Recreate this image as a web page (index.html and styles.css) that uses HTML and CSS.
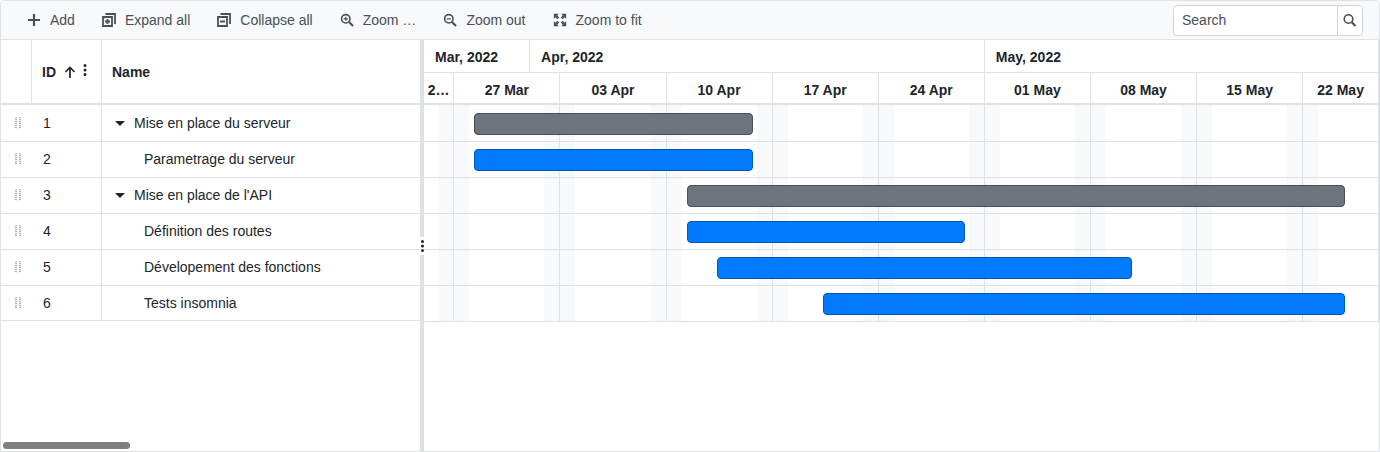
FILE: index.html
```html
<!DOCTYPE html>
<html lang="en">
<head>
<meta charset="utf-8">
<title>Gantt</title>
<link rel="stylesheet" href="styles.css">
</head>
<body>
<main class="gantt">
  <header class="toolbar">
    <div class="tools">
      <button class="tool" type="button"><svg class="icon" viewBox="0 0 14 14"><path d="M7 1v12M1 7h12" stroke="currentColor" stroke-width="2.200" fill="none"/></svg>Add</button>
      <button class="tool" type="button"><svg class="icon" viewBox="0 0 14 14"><path d="M3.500 1h9.500v10M1 4h9v9H1zM5.500 6v5M3 8.500h5" stroke="currentColor" stroke-width="1.800" fill="none"/></svg>Expand all</button>
      <button class="tool" type="button"><svg class="icon" viewBox="0 0 14 14"><path d="M3.500 1h9.500v10M1 4h9v9H1zM3 8.500h5" stroke="currentColor" stroke-width="1.800" fill="none"/></svg>Collapse all</button>
      <button class="tool" type="button"><svg class="icon" viewBox="0 0 14 14"><circle cx="5.800" cy="5.800" r="4.200" stroke="currentColor" stroke-width="1.600" fill="none"/><path d="M9 9l4 4" stroke="currentColor" stroke-width="2.200"/><path d="M3.800 5.800h4M5.800 3.800v4" stroke="currentColor" stroke-width="1.200"/></svg>Zoom …</button>
      <button class="tool" type="button"><svg class="icon" viewBox="0 0 14 14"><circle cx="5.800" cy="5.800" r="4.200" stroke="currentColor" stroke-width="1.600" fill="none"/><path d="M9 9l4 4" stroke="currentColor" stroke-width="2.200"/><path d="M3.800 5.800h4" stroke="currentColor" stroke-width="1.200"/></svg>Zoom out</button>
      <button class="tool" type="button"><svg class="icon" viewBox="0 0 14 14"><path d="M.8.8h5L4.300 2.500 6.200 4.400 4.400 6.200 2.500 4.300.8 5.800zM13.200.8h-5l1.500 1.700-1.900 1.900 1.800 1.800 1.900-1.900 1.700 1.500zM.8 13.200h5l-1.500-1.700 1.900-1.900-1.800-1.800-1.900 1.900L.8 8.200zM13.200 13.200h-5l1.500-1.700-1.900-1.900 1.800-1.800 1.900 1.900 1.700-1.500z" fill="currentColor"/></svg>Zoom to fit</button>
    </div>
    <form class="search">
      <input class="search-input" type="text" placeholder="Search" aria-label="Search">
      <button class="search-button" type="button" aria-label="Search"><svg class="icon" viewBox="0 0 14 14"><circle cx="5.500" cy="6" r="4.300" stroke="currentColor" stroke-width="1.600" fill="none"/><path d="M8.500 9l4 4" stroke="currentColor" stroke-width="2"/></svg></button>
    </form>
  </header>
  <div class="panes">
    <section class="tree">
      <table class="grid">
        <colgroup><col class="col-drag"><col class="col-id"><col></colgroup>
        <thead>
          <tr>
            <th></th>
            <th><span class="head">ID<svg class="sort" viewBox="0 0 12 12"><path d="M6 12V1.500M1.500 6L6 1.500 10.500 6" stroke="currentColor" stroke-width="1.700" fill="none"/></svg><svg class="menu" viewBox="0 0 4 12"><path d="M2 1.500v0M2 6v0M2 10.500v0" stroke="currentColor" stroke-width="3" stroke-linecap="round"/></svg></span></th>
            <th>Name</th>
          </tr>
        </thead>
        <tbody>
          <tr><td><span class="drag"></span></td><td>1</td><td><span class="parent"><span class="caret"></span>Mise en place du serveur</span></td></tr>
          <tr><td><span class="drag"></span></td><td>2</td><td><span class="child">Parametrage du serveur</span></td></tr>
          <tr><td><span class="drag"></span></td><td>3</td><td><span class="parent"><span class="caret"></span>Mise en place de l'API</span></td></tr>
          <tr><td><span class="drag"></span></td><td>4</td><td><span class="child">Définition des routes</span></td></tr>
          <tr><td><span class="drag"></span></td><td>5</td><td><span class="child">Dévelopement des fonctions</span></td></tr>
          <tr><td><span class="drag"></span></td><td>6</td><td><span class="child">Tests insomnia</span></td></tr>
        </tbody>
      </table>
      <div class="scroll-thumb"></div>
    </section>
    <div class="splitter"><span class="handle"><svg class="handle-dots" viewBox="0 0 4 14"><path d="M2.500 2.500v0M2.500 7v0M2.500 11.500v0" stroke="currentColor" stroke-width="3" stroke-linecap="round"/></svg></span></div>
    <section class="timeline">
      <div class="months"><div>Mar, 2022</div><div>Apr, 2022</div><div>May, 2022</div></div>
      <div class="weeks week-names"><div>2…</div><div>27 Mar</div><div>03 Apr</div><div>10 Apr</div><div>17 Apr</div><div>24 Apr</div><div>01 May</div><div>08 May</div><div>15 May</div><div>22 May</div></div>
      <div class="chart">
        <div class="weeks stripes"><div></div><div></div><div></div><div></div><div></div><div></div><div></div><div></div><div></div><div></div></div>
        <div class="rows">
          <div class="row"><div class="bar summary" style="margin-left:5.24%;width:29.2%"></div></div>
          <div class="row"><div class="bar" style="margin-left:5.24%;width:29.2%"></div></div>
          <div class="row"><div class="bar summary" style="margin-left:27.54%;width:68.9%"></div></div>
          <div class="row"><div class="bar" style="margin-left:27.54%;width:29.1%"></div></div>
          <div class="row"><div class="bar" style="margin-left:30.68%;width:43.46%"></div></div>
          <div class="row"><div class="bar" style="margin-left:41.78%;width:54.66%"></div></div>
        </div>
      </div>
    </section>
  </div>
</main>
</body>
</html>
```
FILE: styles.css
```css
* { box-sizing: border-box; }
body { margin: 0; background: #fff; }
.gantt {
  display: flex;
  flex-direction: column;
  min-height: 100vh;
  border: 1px solid #dee2e6;
  border-radius: 4px 4px 0 0;
  overflow: hidden;
  color: #212529;
  font: 14px/20px "Liberation Sans", Arial, sans-serif;
}
.toolbar {
  display: flex;
  justify-content: space-between;
  align-items: center;
  height: 39px;
  padding: 0 16px;
  background: #f8f9fa;
  border-bottom: 1px solid #dee2e6;
}
.tools { display: flex; gap: 7px; }
.tool {
  display: flex;
  align-items: center;
  gap: 9px;
  padding: 0 10px;
  border: 0;
  background: none;
  color: #495057;
  font: inherit;
  white-space: nowrap;
}
.icon { width: 14px; height: 14px; flex: none; }
.search {
  display: flex;
  width: 190px;
  height: 31px;
  border: 1px solid #ced4da;
  border-radius: 4px;
  background: #fff;
  overflow: hidden;
}
.search-input {
  flex: 1;
  min-width: 0;
  padding: 0 8px;
  border: 0;
  background: none;
  font: inherit;
  color: #495057;
}
.search-input::placeholder { color: #495057; opacity: 1; }
.search-button {
  display: flex;
  align-items: center;
  justify-content: center;
  width: 25px;
  padding: 0;
  border: 0;
  border-left: 1px solid #ced4da;
  background: #fff;
  color: #495057;
}
.panes { display: flex; flex: 1; }
.tree {
  display: flex;
  flex-direction: column;
  justify-content: space-between;
  width: 419px;
  flex: none;
}
.grid {
  width: 100%;
  table-layout: fixed;
  border-collapse: separate;
  border-spacing: 0;
}
.col-drag { width: 31px; }
.col-id { width: 70px; }
.grid th {
  height: 65px;
  padding: 0 10px;
  text-align: left;
  border-right: 1px solid #dee2e6;
  border-bottom: 2px solid #dee2e6;
}
.grid td {
  height: 36px;
  padding: 7px 11px 0;
  vertical-align: top;
  border-bottom: 1px solid #dee2e6;
}
.grid th:last-child { border-right: 0; }
.grid tbody tr:first-child td { height: 37px; padding-top: 8px; }
.grid tbody tr:last-child td { height: 35px; }
.grid td:nth-child(2) { border-right: 1px solid #dee2e6; }
.grid td:first-child { padding-left: 14px; }
.head { display: flex; align-items: center; }
.sort { width: 12px; height: 12px; margin-left: 8px; }
.menu { width: 4px; height: 12px; margin: 0 0 4px 7px; }
.drag {
  display: block;
  width: 6px;
  height: 12px;
  margin-top: 4px;
  background: repeating-linear-gradient(to bottom, #adb5bd 0 1px, #e9ecef 1px 2px);
  border-radius: 1px;
  mask: linear-gradient(to right, #000 2px, transparent 2px 4px, #000 4px);
}
.parent { display: flex; align-items: center; gap: 9px; padding-left: 2px; }
.caret {
  border: 5px solid transparent;
  border-top-color: #212529;
  border-bottom: 0;
}
.child { padding-left: 31px; }
.scroll-thumb {
  width: 127px;
  height: 7px;
  margin: 0 2px 2px;
  border-radius: 4px;
  background: #808080;
}
.splitter {
  display: flex;
  align-items: center;
  width: 4px;
  flex: none;
  background: #dee2e6;
}
.handle {
  display: flex;
  align-items: center;
  width: 4px;
  height: 18px;
  background: #fff;
}
.handle-dots { width: 4px; height: 14px; }
.timeline { flex: 1; min-width: 0; font-weight: bold; }
.months, .weeks { display: grid; }
.months { grid-template-columns: 7fr 30fr 26fr; }
.weeks { grid-template-columns: 2fr repeat(8, 7fr) 5fr; }
.months > div, .weeks > div {
  min-width: 0;
  border-right: 1px solid #dee2e6;
}
.months > div {
  height: 33px;
  padding: 7px 11px 0;
  border-bottom: 1px solid #dee2e6;
}
.week-names > div {
  height: 32px;
  padding-top: 7px;
  text-align: center;
  white-space: nowrap;
  border-bottom: 2px solid #dee2e6;
}
.chart { display: grid; }
.stripes, .rows { grid-area: 1 / 1; }
.rows { padding-top: 1px; }
.stripes > div {
  background: linear-gradient(to right, #f8f9fa 14.3%, transparent 14.3%, transparent 85.7%, #f8f9fa 85.7%);
}
.stripes > div:first-child { background: linear-gradient(to right, transparent 50%, #f8f9fa 50%); }
.stripes > div:last-child { background: linear-gradient(to right, #f8f9fa 20%, transparent 20%); }
.row {
  height: 36px;
  padding-top: 7px;
  border-bottom: 1px solid #dee2e6;
}
.row .bar {
  height: 22px;
  border: 1px solid #0056b3;
  border-radius: 4px;
  background: #007bff;
}
.row .summary { border-color: #495057; background: #6c757d; }
```
